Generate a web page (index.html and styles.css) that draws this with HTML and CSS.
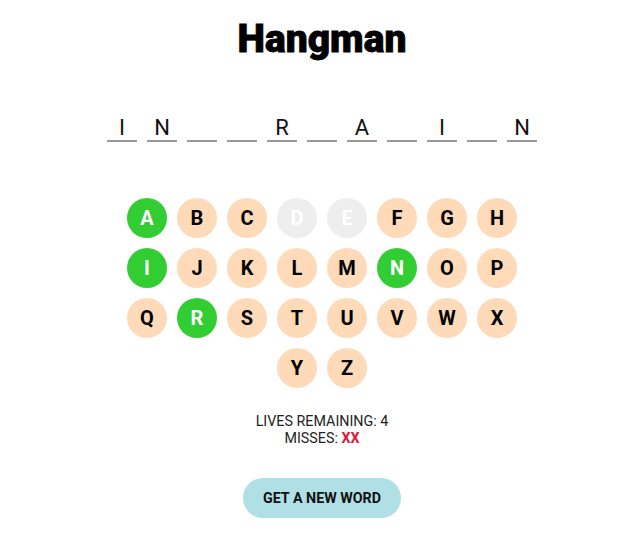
FILE: index.html
```html
<!DOCTYPE html>
<html lang="en">
<head>
<meta charset="utf-8">
<title>Hangman</title>
<link rel="stylesheet" href="styles.css">
</head>
<body>
<main class="app">
  <h1 class="title">Hangman</h1>
  <div class="word">
    <span class="slot">I</span>
    <span class="slot">N</span>
    <span class="slot"></span>
    <span class="slot"></span>
    <span class="slot">R</span>
    <span class="slot"></span>
    <span class="slot">A</span>
    <span class="slot"></span>
    <span class="slot">I</span>
    <span class="slot"></span>
    <span class="slot">N</span>
  </div>
  <div class="keys">
    <button class="key hit">A</button>
    <button class="key">B</button>
    <button class="key">C</button>
    <button class="key used">D</button>
    <button class="key used">E</button>
    <button class="key">F</button>
    <button class="key">G</button>
    <button class="key">H</button>
    <button class="key hit">I</button>
    <button class="key">J</button>
    <button class="key">K</button>
    <button class="key">L</button>
    <button class="key">M</button>
    <button class="key hit">N</button>
    <button class="key">O</button>
    <button class="key">P</button>
    <button class="key">Q</button>
    <button class="key hit">R</button>
    <button class="key">S</button>
    <button class="key">T</button>
    <button class="key">U</button>
    <button class="key">V</button>
    <button class="key">W</button>
    <button class="key">X</button>
    <button class="key">Y</button>
    <button class="key">Z</button>
  </div>
  <div class="status">
    <div>LIVES REMAINING: 4</div>
    <div>MISSES: <span class="misses">XX</span></div>
  </div>
  <button class="reset">GET A NEW WORD</button>
</main>
</body>
</html>
```
FILE: styles.css
```css
html, body {
  margin: 0;
  padding: 0;
  background: #fff;
}
body {
  font-family: Roboto, "Liberation Sans", sans-serif;
  color: #111;
}
.app {
  display: flex;
  flex-direction: column;
  align-items: center;
  padding-left: 10px;
}
.title {
  margin: 16px 0 0;
  font-size: 39px;
  line-height: 47px;
  font-weight: 900;
  color: #000;
  -webkit-text-stroke: 0.8px #000;
}
.word {
  display: flex;
  gap: 10px;
  margin-top: 53px;
}
.slot {
  display: block;
  width: 30px;
  height: 24px;
  line-height: 24px;
  font-size: 22px;
  text-align: center;
  border-bottom: 2px solid #999;
  color: #111;
}
.keys {
  display: flex;
  flex-wrap: wrap;
  justify-content: center;
  width: 400px;
  margin-top: 51px;
}
.key {
  width: 40px;
  height: 40px;
  margin: 5px;
  padding: 0;
  border: none;
  border-radius: 50%;
  background: #ffdab9;
  color: #000;
  font-family: Roboto, "Liberation Sans", sans-serif;
  font-size: 20px;
  font-weight: 700;
  line-height: 40px;
}
.key.hit {
  background: #32cd32;
  color: #fff;
}
.key.used {
  background: #eee;
  color: #fff;
}
.status {
  margin-top: 20px;
  font-size: 14.3px;
  line-height: 17px;
  text-align: center;
  color: #222;
}
.misses {
  color: #dc143c;
  font-weight: 700;
}
.reset {
  margin-top: 31px;
  width: 158px;
  height: 40px;
  padding: 0;
  border: none;
  border-radius: 20px;
  background: #b0e0e6;
  color: #111;
  font-family: Roboto, "Liberation Sans", sans-serif;
  font-size: 14.3px;
  font-weight: 700;
}
```
